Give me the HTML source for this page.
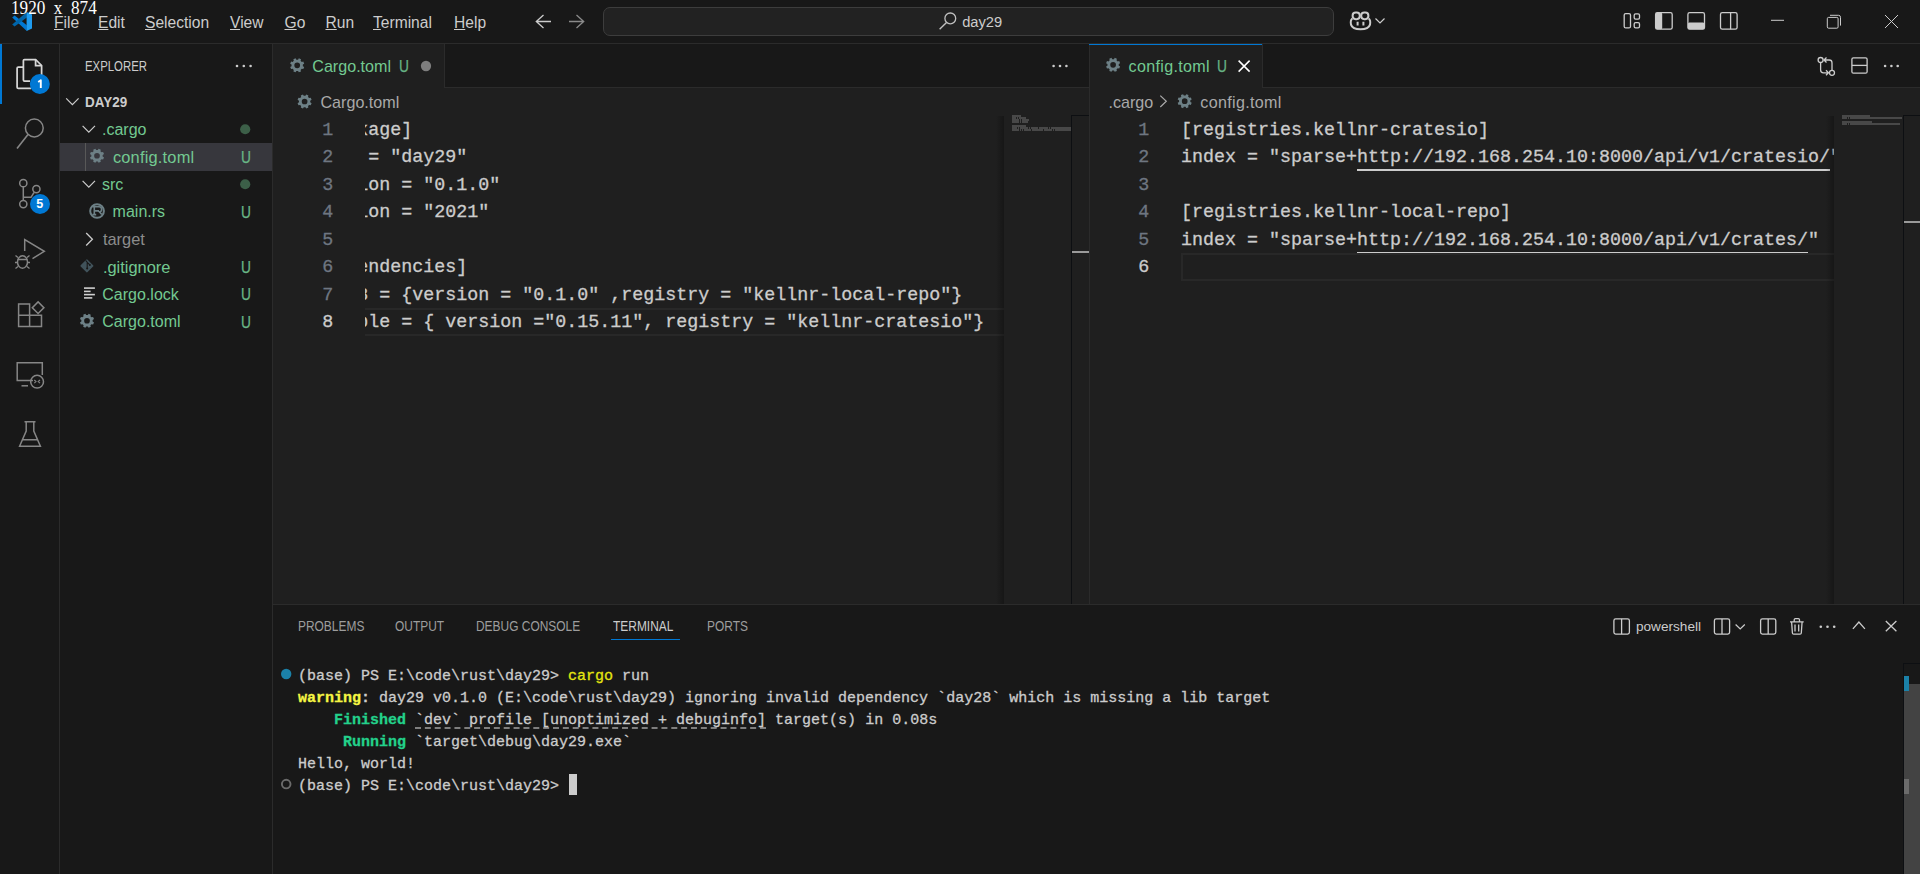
<!DOCTYPE html>
<html><head><meta charset="utf-8">
<style>
*{box-sizing:border-box;margin:0;padding:0}
html,body{width:1920px;height:874px;overflow:hidden;background:#181818;font-family:"Liberation Sans",sans-serif;color:#cccccc}
.a{position:absolute;white-space:pre}
.mono{font-family:"Liberation Mono",monospace}
.code{-webkit-text-stroke:0.3px currentColor}
svg{position:absolute;overflow:visible}
.menu{font-size:15.6px;top:14.2px;line-height:18px;color:#cccccc}
.menu u{text-decoration:underline;text-underline-offset:1px;text-decoration-thickness:1px}
</style></head><body>
<!-- TITLE BAR -->
<div class="a" style="left:0;top:0;width:1920px;height:44px;background:#181818;border-bottom:1px solid #2b2b2b"></div>
<svg style="left:0;top:0" width="40" height="40" viewBox="0 0 40 40">
 <polygon points="12.2,17.4 14.6,15.4 26.8,25.2 26.8,31" fill="#0078d4"/>
 <polygon points="12.2,24.6 14.6,26.6 26.8,17.6 26.8,12" fill="#0065a9"/>
 <polygon points="26.6,12 32,14.6 32,28.4 26.6,31" fill="#1f9cf0"/>
</svg>
<div class="a menu" style="left:54px"><u>F</u>ile</div>
<div class="a menu" style="left:98px"><u>E</u>dit</div>
<div class="a menu" style="left:145px"><u>S</u>election</div>
<div class="a menu" style="left:230px"><u>V</u>iew</div>
<div class="a menu" style="left:284.5px"><u>G</u>o</div>
<div class="a menu" style="left:325.5px"><u>R</u>un</div>
<div class="a menu" style="left:373px"><u>T</u>erminal</div>
<div class="a menu" style="left:454px"><u>H</u>elp</div>
<svg style="left:0;top:0" width="10" height="10">
 <path d="M543.5,15 L536.3,21.5 L543.5,28 M536.3,21.5 H551" stroke="#cccccc" stroke-width="1.3" fill="none"/>
 <path d="M576.5,15 L583.7,21.5 L576.5,28 M583.7,21.5 H569" stroke="#8a8a8a" stroke-width="1.3" fill="none"/>
</svg>
<div class="a" style="left:602.5px;top:6.8px;width:731px;height:29px;background:#222222;border:1px solid #3d3d3d;border-radius:7px"></div>
<svg style="left:0;top:0" width="10" height="10">
 <circle cx="950.3" cy="18.4" r="5.4" stroke="#c0c0c0" stroke-width="1.3" fill="none"/>
 <path d="M946.5,22.4 L939.6,29.3" stroke="#c0c0c0" stroke-width="1.4" fill="none"/>
</svg>
<div class="a" style="left:962.2px;top:13px;font-size:14.7px;line-height:18px;color:#cccccc">day29</div>
<!-- copilot -->
<svg style="left:0;top:0" width="10" height="10" fill="none" stroke="#cccccc">
 <rect x="1352.6" y="12.6" width="7.2" height="6.6" rx="3.1" stroke-width="2"/>
 <rect x="1361.2" y="12.6" width="7.2" height="6.6" rx="3.1" stroke-width="2"/>
 <path d="M1352.3,18.6 C1350.6,19.8 1350.6,22.5 1351,24.6 C1352.2,28.6 1356,29.3 1360.5,29.3 C1365,29.3 1368.8,28.6 1370,24.6 C1370.4,22.5 1370.4,19.8 1368.7,18.6" stroke-width="2"/>
 <path d="M1357.6,21.8 V25.4 M1363.4,21.8 V25.4" stroke-width="2"/>
 <path d="M1375.5,18.5 L1380,23 L1384.5,18.5" stroke-width="1.2"/>
</svg>
<!-- layout icons -->
<svg style="left:0;top:0" width="10" height="10">
 <rect x="1624.2" y="13.6" width="6.3" height="14.3" rx="1.5" stroke="#cccccc" stroke-width="1.3" fill="none"/>
 <rect x="1634.2" y="13.8" width="5.3" height="5.3" rx="1.4" stroke="#cccccc" stroke-width="1.3" fill="none"/>
 <rect x="1634.2" y="22.6" width="5.3" height="5.3" rx="1.4" stroke="#cccccc" stroke-width="1.3" fill="none"/>
 <rect x="1655.6" y="12.6" width="16.6" height="16.6" rx="1.8" stroke="#cccccc" stroke-width="1.3" fill="none"/>
 <rect x="1655.6" y="12.6" width="6.6" height="16.6" rx="1.5" fill="#cccccc"/>
 <rect x="1687.9" y="12.6" width="16.6" height="16.6" rx="1.8" stroke="#cccccc" stroke-width="1.3" fill="none"/>
 <rect x="1687.9" y="22.6" width="16.6" height="6.6" rx="1.5" fill="#cccccc"/>
 <rect x="1720.5" y="12.6" width="16.6" height="16.6" rx="1.8" stroke="#cccccc" stroke-width="1.3" fill="none"/>
 <path d="M1730.6,12.6 V29.2" stroke="#cccccc" stroke-width="1.3"/>
 <path d="M1771,20.3 H1784" stroke="#cccccc" stroke-width="1"/>
 <rect x="1827.3" y="17.4" width="10.8" height="10.8" rx="1.3" stroke="#cccccc" stroke-width="1" fill="none"/>
 <path d="M1830,15.3 H1838.5 Q1840.5,15.3 1840.5,17.3 V25.6" stroke="#cccccc" stroke-width="1" fill="none"/>
 <path d="M1885,15 L1898,28 M1898,15 L1885,28" stroke="#cccccc" stroke-width="1" fill="none"/>
</svg>
<div class="a" style="left:11.2px;top:-0.2px;font-family:'Liberation Serif',serif;font-size:18.3px;line-height:17px;color:#ffffff;transform:scaleX(0.938);transform-origin:0 0">1920  x  874</div>

<!-- ACTIVITY BAR -->
<div class="a" style="left:0;top:44px;width:60px;height:830px;background:#181818;border-right:1px solid #2b2b2b"></div>
<div class="a" style="left:0;top:44px;width:2px;height:60px;background:#0078d4"></div>
<svg style="left:0;top:0" width="10" height="10" fill="none" stroke-width="1.5">
 <!-- explorer -->
 <g stroke-width="1.75">
 <path d="M23.4,67 V60.6 Q23.4,59.5 24.5,59.5 H35.6 L41.6,65.5 V76" stroke="#d7d7d7"/>
 <path d="M35.6,59.5 V65.5 H41.6" stroke="#d7d7d7"/>
 <path d="M23.4,67 H18.3 Q17.1,67 17.1,68.2 V87.2 Q17.1,88.3 18.3,88.3 H31" stroke="#d7d7d7"/>
 <path d="M23.4,67 V80 Q23.4,81 24.5,81 H30" stroke="#d7d7d7"/>
 </g>
 <!-- search -->
 <circle cx="34.3" cy="128" r="8.9" stroke="#868686"/>
 <path d="M28,134.5 L17,148.5" stroke="#868686" stroke-width="1.6"/>
 <!-- source control -->
 <circle cx="23.3" cy="183.2" r="3.6" stroke="#868686"/>
 <circle cx="23.3" cy="204.1" r="3.6" stroke="#868686"/>
 <circle cx="36.4" cy="189.1" r="3.6" stroke="#868686"/>
 <path d="M23.3,187.1 V200.2 M23.3,197.3 H31 L34,192.5" stroke="#868686"/>
 <!-- run debug -->
 <path d="M24.7,251 V239.5 L44.3,251.3 L32.5,258.6" stroke="#868686"/>
 <ellipse cx="22.5" cy="262" rx="5" ry="6.2" stroke="#868686"/>
 <path d="M17.5,259.5 H27.5 M15.5,255.5 L18,257.5 M29.5,255.5 L27,257.5 M15,262.5 H17.5 M27.5,262.5 H30 M15.5,268.5 L18,266.5 M29.5,268.5 L27,266.5" stroke="#868686" stroke-width="1.3"/>
 <!-- extensions -->
 <path d="M18.6,304 H29.6 V315.2 H41.5 V326.4 H18.6 Z M18.6,315.2 H29.6 V326.4" stroke="#868686"/>
 <rect x="34" y="303.6" width="8.2" height="8.2" transform="rotate(45 38.1 307.7)" stroke="#868686"/>
 <!-- remote explorer -->
 <path d="M33,380.5 H17.2 V362.8 H42.3 V375" stroke="#868686"/>
 <path d="M21.5,385.8 H28" stroke="#868686"/>
 <circle cx="37.1" cy="381.7" r="6.4" stroke="#868686"/>
 <path d="M34.3,380 L36,381.6 L34.3,383.2 M40,380 L38.2,381.6 L40,383.2" stroke="#868686" stroke-width="1.1"/>
 <!-- testing -->
 <path d="M24.5,421.8 H35.5 M26.2,421.8 V431 L19.6,446.2 H40.4 L33.8,431 V421.8 M22.5,439.8 H37.5" stroke="#868686"/>
</svg>
<svg style="left:0;top:0" width="10" height="10"><circle cx="39.8" cy="84" r="10" fill="#0078d4"/><path d="M40.8,88 V80.3 L38.2,82" stroke="#ffffff" stroke-width="1.9" fill="none" stroke-linejoin="round"/></svg>
<div class="a" style="left:29.8px;top:193.8px;width:20px;height:20px;border-radius:10px;background:#0078d4;color:#fff;font-size:12.5px;font-weight:bold;line-height:20px;text-align:center">5</div>

<!-- SIDEBAR -->
<div class="a" style="left:60px;top:44px;width:213px;height:830px;background:#181818;border-right:1px solid #2b2b2b"></div>
<div class="a" style="left:85.2px;top:57.5px;font-size:14.6px;line-height:16px;color:#cccccc;transform:scaleX(0.78);transform-origin:0 0">EXPLORER</div>
<svg style="left:0;top:0" width="10" height="10"><circle cx="237" cy="66" r="1.3" fill="#cccccc"/><circle cx="243.8" cy="66" r="1.3" fill="#cccccc"/><circle cx="250.6" cy="66" r="1.3" fill="#cccccc"/></svg>
<div class="a" style="left:60px;top:143.00px;width:212px;height:27.5px;background:#37373d"></div>
<div class="a" style="left:85px;top:143.00px;width:1px;height:27.5px;background:#585858"></div>
<svg style="left:0;top:0" width="10" height="10" fill="none">
<path d="M66.2,98.35 L72.4,104.55 L78.60000000000001,98.35" stroke="#cccccc" stroke-width="1.2"/>
<path d="M82.6,125.85 L88.8,132.05 L95.0,125.85" stroke="#cccccc" stroke-width="1.2"/>
<path d="M82.6,180.85 L88.8,187.05 L95.0,180.85" stroke="#cccccc" stroke-width="1.2"/>
<path d="M86.2,233.05 L92.4,239.25 L86.2,245.45" stroke="#cccccc" stroke-width="1.3"/>
<path d="M102.64,156.60 L104.01,157.38 L103.11,159.56 L101.58,159.14 L100.39,160.33 L100.81,161.86 L98.63,162.76 L97.85,161.39 L96.15,161.39 L95.37,162.76 L93.19,161.86 L93.61,160.33 L92.42,159.14 L90.89,159.56 L89.99,157.38 L91.36,156.60 L91.36,154.90 L89.99,154.12 L90.89,151.94 L92.42,152.36 L93.61,151.17 L93.19,149.64 L95.37,148.74 L96.15,150.11 L97.85,150.11 L98.63,148.74 L100.81,149.64 L100.39,151.17 L101.58,152.36 L103.11,151.94 L104.01,154.12 L102.64,154.90 Z M99.85,155.75 A2.85,2.85 0 1,0 94.15,155.75 A2.85,2.85 0 1,0 99.85,155.75 Z" fill="#6d8086" fill-rule="evenodd"/>
<path d="M92.64,321.60 L94.01,322.38 L93.11,324.56 L91.58,324.14 L90.39,325.33 L90.81,326.86 L88.63,327.76 L87.85,326.39 L86.15,326.39 L85.37,327.76 L83.19,326.86 L83.61,325.33 L82.42,324.14 L80.89,324.56 L79.99,322.38 L81.36,321.60 L81.36,319.90 L79.99,319.12 L80.89,316.94 L82.42,317.36 L83.61,316.17 L83.19,314.64 L85.37,313.74 L86.15,315.11 L87.85,315.11 L88.63,313.74 L90.81,314.64 L90.39,316.17 L91.58,317.36 L93.11,316.94 L94.01,319.12 L92.64,319.90 Z M89.85,320.75 A2.85,2.85 0 1,0 84.15,320.75 A2.85,2.85 0 1,0 89.85,320.75 Z" fill="#6d8086" fill-rule="evenodd"/>
<circle cx="97.05" cy="211.0" r="6.85" stroke="#6d8086" stroke-width="2"/>
<path d="M92.6,206.8 H99.2 Q101.6,206.8 101.6,209.4 Q101.6,211.6 99.4,211.8 L101.8,214.6 M94.3,206.8 V214.6 M92.4,214.6 H96.2 M94.3,210.9 H99" stroke="#6d8086" stroke-width="1.6" fill="none"/>
<rect x="82.0" y="261.0" width="9.8" height="9.8" rx="1" transform="rotate(45 86.9 265.9)" fill="#41535b"/>
<path d="M85.6,260.4 L87.2,262.09999999999997 V268.9 M87.2,262.29999999999995 L89.8,264.9" stroke="#181818" stroke-width="1.1" fill="none"/><circle cx="87.2" cy="268.5" r="1" fill="#181818"/><circle cx="89.9" cy="265.0" r="1" fill="#181818"/>
<path d="M84,288.1 H94.9" stroke="#d0d0d0" stroke-width="1.6"/>
<path d="M84,291.4 H90.6" stroke="#d0d0d0" stroke-width="1.6"/>
<path d="M84,294.6 H94.9" stroke="#d0d0d0" stroke-width="1.6"/>
<path d="M84,297.9 H92.3" stroke="#d0d0d0" stroke-width="1.6"/>
<circle cx="245.2" cy="129.25" r="5.1" fill="#3c5f48"/>
<circle cx="245.2" cy="184.25" r="5.1" fill="#3c5f48"/>
</svg>
<div class="a" style="left:85.3px;top:94.15px;font-size:14.1px;font-weight:bold;line-height:16px;color:#cccccc;transform:scaleX(0.955);transform-origin:0 0">DAY29</div>
<div class="a" style="left:102.00px;top:119.61px;font-size:16.0px;letter-spacing:0;line-height:20px;color:#73c991">.cargo</div>
<div class="a" style="left:112.90px;top:146.75px;font-size:16.4px;letter-spacing:0.2px;line-height:20px;color:#73c991">config.toml</div>
<div class="a" style="left:241.0px;top:147.75px;font-size:16px;line-height:20px;color:#68b585;transform:scaleX(0.86);transform-origin:0 0;-webkit-text-stroke:0.25px #68b585">U</div>
<div class="a" style="left:102.00px;top:174.61px;font-size:16.0px;letter-spacing:0;line-height:20px;color:#73c991">src</div>
<div class="a" style="left:112.60px;top:202.11px;font-size:16.0px;letter-spacing:0;line-height:20px;color:#73c991">main.rs</div>
<div class="a" style="left:241.0px;top:202.75px;font-size:16px;line-height:20px;color:#68b585;transform:scaleX(0.86);transform-origin:0 0;-webkit-text-stroke:0.25px #68b585">U</div>
<div class="a" style="left:102.90px;top:229.25px;font-size:16.4px;letter-spacing:0;line-height:20px;color:#8c8c8c">target</div>
<div class="a" style="left:102.90px;top:256.75px;font-size:16.4px;letter-spacing:0;line-height:20px;color:#73c991">.gitignore</div>
<div class="a" style="left:241.0px;top:257.75px;font-size:16px;line-height:20px;color:#68b585;transform:scaleX(0.86);transform-origin:0 0;-webkit-text-stroke:0.25px #68b585">U</div>
<div class="a" style="left:102.30px;top:284.61px;font-size:16.0px;letter-spacing:0;line-height:20px;color:#73c991">Cargo.lock</div>
<div class="a" style="left:241.0px;top:285.25px;font-size:16px;line-height:20px;color:#68b585;transform:scaleX(0.86);transform-origin:0 0;-webkit-text-stroke:0.25px #68b585">U</div>
<div class="a" style="left:102.30px;top:312.11px;font-size:16.0px;letter-spacing:0;line-height:20px;color:#73c991">Cargo.toml</div>
<div class="a" style="left:241.0px;top:312.75px;font-size:16px;line-height:20px;color:#68b585;transform:scaleX(0.86);transform-origin:0 0;-webkit-text-stroke:0.25px #68b585">U</div>
<!-- EDITOR 1 -->
<div class="a" style="left:273px;top:44px;width:816px;height:560px;background:#1f1f1f"></div>
<div class="a" style="left:444px;top:44px;width:645px;height:44px;background:#181818;border-bottom:1px solid #2b2b2b"></div>
<div class="a" style="left:444px;top:44px;width:1px;height:43px;background:#2b2b2b"></div>
<svg style="left:0;top:0" width="10" height="10"><path d="M302.84,66.15 L304.21,66.93 L303.31,69.11 L301.78,68.69 L300.59,69.88 L301.01,71.41 L298.83,72.31 L298.05,70.94 L296.35,70.94 L295.57,72.31 L293.39,71.41 L293.81,69.88 L292.62,68.69 L291.09,69.11 L290.19,66.93 L291.56,66.15 L291.56,64.45 L290.19,63.67 L291.09,61.49 L292.62,61.91 L293.81,60.72 L293.39,59.19 L295.57,58.29 L296.35,59.66 L298.05,59.66 L298.83,58.29 L301.01,59.19 L300.59,60.72 L301.78,61.91 L303.31,61.49 L304.21,63.67 L302.84,64.45 Z M300.05,65.30 A2.85,2.85 0 1,0 294.35,65.30 A2.85,2.85 0 1,0 300.05,65.30 Z" fill="#6d8086" fill-rule="evenodd"/><path d="M310.24,102.35 L311.61,103.13 L310.71,105.31 L309.18,104.89 L307.99,106.08 L308.41,107.61 L306.23,108.51 L305.45,107.14 L303.75,107.14 L302.97,108.51 L300.79,107.61 L301.21,106.08 L300.02,104.89 L298.49,105.31 L297.59,103.13 L298.96,102.35 L298.96,100.65 L297.59,99.87 L298.49,97.69 L300.02,98.11 L301.21,96.92 L300.79,95.39 L302.97,94.49 L303.75,95.86 L305.45,95.86 L306.23,94.49 L308.41,95.39 L307.99,96.92 L309.18,98.11 L310.71,97.69 L311.61,99.87 L310.24,100.65 Z M307.45,101.50 A2.85,2.85 0 1,0 301.75,101.50 A2.85,2.85 0 1,0 307.45,101.50 Z" fill="#6d8086" fill-rule="evenodd"/></svg>
<div class="a" style="left:312.3px;top:56px;font-size:16.1px;line-height:20px;color:#73c991">Cargo.toml</div>
<div class="a" style="left:399px;top:56.6px;font-size:16px;line-height:20px;color:#66b183;transform:scaleX(0.86);transform-origin:0 0;-webkit-text-stroke:0.25px #66b183">U</div>
<svg style="left:0;top:0" width="10" height="10"><circle cx="426.0" cy="66" r="5.15" fill="#7e7e7e"/><circle cx="1053.6" cy="66" r="1.3" fill="#cccccc"/><circle cx="1060" cy="66" r="1.3" fill="#cccccc"/><circle cx="1066.4" cy="66" r="1.3" fill="#cccccc"/></svg>
<div class="a" style="left:320.5px;top:92px;font-size:16.1px;line-height:20px;color:#a9a9a9">Cargo.toml</div>
<div class="a" style="left:365px;top:308.00px;width:639px;height:27.5px;border-top:2px solid #282828;border-bottom:2px solid #282828"></div>
<div class="a mono code" style="left:282.2px;width:51px;text-align:right;top:116.56px;font-size:18.33px;line-height:27.5px;color:#6e7681">1</div>
<div class="a mono code" style="left:282.2px;width:51px;text-align:right;top:144.06px;font-size:18.33px;line-height:27.5px;color:#6e7681">2</div>
<div class="a mono code" style="left:282.2px;width:51px;text-align:right;top:171.56px;font-size:18.33px;line-height:27.5px;color:#6e7681">3</div>
<div class="a mono code" style="left:282.2px;width:51px;text-align:right;top:199.06px;font-size:18.33px;line-height:27.5px;color:#6e7681">4</div>
<div class="a mono code" style="left:282.2px;width:51px;text-align:right;top:226.56px;font-size:18.33px;line-height:27.5px;color:#6e7681">5</div>
<div class="a mono code" style="left:282.2px;width:51px;text-align:right;top:254.06px;font-size:18.33px;line-height:27.5px;color:#6e7681">6</div>
<div class="a mono code" style="left:282.2px;width:51px;text-align:right;top:281.56px;font-size:18.33px;line-height:27.5px;color:#6e7681">7</div>
<div class="a mono code" style="left:282.2px;width:51px;text-align:right;top:309.06px;font-size:18.33px;line-height:27.5px;color:#cccccc">8</div>
<div class="a" style="left:365px;top:115.50px;width:639px;height:440px;overflow:hidden">
<div class="a mono code" style="left:-51.70px;top:1.06px;font-size:18.33px;line-height:27.5px;color:#cccccc">[package]</div>
<div class="a mono code" style="left:-51.70px;top:28.56px;font-size:18.33px;line-height:27.5px;color:#cccccc">name = "day29"</div>
<div class="a mono code" style="left:-51.70px;top:56.06px;font-size:18.33px;line-height:27.5px;color:#cccccc">version = "0.1.0"</div>
<div class="a mono code" style="left:-51.70px;top:83.56px;font-size:18.33px;line-height:27.5px;color:#cccccc">edition = "2021"</div>
<div class="a mono code" style="left:-51.70px;top:111.06px;font-size:18.33px;line-height:27.5px;color:#cccccc"></div>
<div class="a mono code" style="left:-51.70px;top:138.56px;font-size:18.33px;line-height:27.5px;color:#cccccc">[dependencies]</div>
<div class="a mono code" style="left:-51.70px;top:166.06px;font-size:18.33px;line-height:27.5px;color:#cccccc">day28 = {version = "0.1.0" ,registry = "kellnr-local-repo"}</div>
<div class="a mono code" style="left:-51.70px;top:193.56px;font-size:18.33px;line-height:27.5px;color:#cccccc">tumbble = { version ="0.15.11", registry = "kellnr-cratesio"}</div>
</div>
<div class="a" style="left:996px;top:115.5px;width:8px;height:488.5px;background:linear-gradient(to right,rgba(0,0,0,0),rgba(0,0,0,0.28))"></div>
<div class="a" style="left:1071px;top:114.5px;width:18px;height:489.5px;border-left:1px solid #0d0f12;border-top:1px solid #0d0f12"></div>
<div class="a" style="left:1072px;top:251px;width:17px;height:2px;background:#9a9a9a"></div>
<svg style="left:0;top:0" width="10" height="10"><rect x="1012.00" y="115.00" width="9.00" height="2" fill="rgba(204,204,204,0.24)"/><rect x="1012.00" y="117.00" width="4.00" height="2" fill="rgba(204,204,204,0.24)"/><rect x="1017.00" y="117.00" width="1.00" height="2" fill="rgba(204,204,204,0.24)"/><rect x="1019.00" y="117.00" width="7.00" height="2" fill="rgba(204,204,204,0.24)"/><rect x="1012.00" y="119.00" width="7.00" height="2" fill="rgba(204,204,204,0.24)"/><rect x="1020.00" y="119.00" width="1.00" height="2" fill="rgba(204,204,204,0.24)"/><rect x="1022.00" y="119.00" width="7.00" height="2" fill="rgba(204,204,204,0.24)"/><rect x="1012.00" y="121.00" width="7.00" height="2" fill="rgba(204,204,204,0.24)"/><rect x="1020.00" y="121.00" width="1.00" height="2" fill="rgba(204,204,204,0.24)"/><rect x="1022.00" y="121.00" width="6.00" height="2" fill="rgba(204,204,204,0.24)"/><rect x="1012.00" y="125.00" width="14.00" height="2" fill="rgba(204,204,204,0.24)"/><rect x="1012.00" y="127.00" width="5.00" height="2" fill="rgba(204,204,204,0.24)"/><rect x="1018.00" y="127.00" width="1.00" height="2" fill="rgba(204,204,204,0.24)"/><rect x="1020.00" y="127.00" width="8.00" height="2" fill="rgba(204,204,204,0.24)"/><rect x="1029.00" y="127.00" width="1.00" height="2" fill="rgba(204,204,204,0.24)"/><rect x="1031.00" y="127.00" width="7.00" height="2" fill="rgba(204,204,204,0.24)"/><rect x="1039.00" y="127.00" width="9.00" height="2" fill="rgba(204,204,204,0.24)"/><rect x="1049.00" y="127.00" width="1.00" height="2" fill="rgba(204,204,204,0.24)"/><rect x="1051.00" y="127.00" width="20.00" height="2" fill="rgba(204,204,204,0.24)"/><rect x="1012.00" y="129.00" width="7.00" height="2" fill="rgba(204,204,204,0.24)"/><rect x="1020.00" y="129.00" width="1.00" height="2" fill="rgba(204,204,204,0.24)"/><rect x="1022.00" y="129.00" width="1.00" height="2" fill="rgba(204,204,204,0.24)"/><rect x="1024.00" y="129.00" width="7.00" height="2" fill="rgba(204,204,204,0.24)"/><rect x="1032.00" y="129.00" width="11.00" height="2" fill="rgba(204,204,204,0.24)"/><rect x="1044.00" y="129.00" width="8.00" height="2" fill="rgba(204,204,204,0.24)"/><rect x="1053.00" y="129.00" width="1.00" height="2" fill="rgba(204,204,204,0.24)"/><rect x="1055.00" y="129.00" width="16.00" height="2" fill="rgba(204,204,204,0.24)"/></svg>
<!-- EDITOR 2 -->
<div class="a" style="left:1089px;top:44px;width:831px;height:560px;background:#1f1f1f;border-left:1px solid #2b2b2b"></div>
<div class="a" style="left:1262px;top:44px;width:658px;height:44px;background:#181818;border-bottom:1px solid #2b2b2b"></div>
<div class="a" style="left:1262px;top:44px;width:1px;height:43px;background:#2b2b2b"></div>
<div class="a" style="left:1089px;top:44px;width:173px;height:1px;background:#0078d4"></div>
<svg style="left:0;top:0" width="10" height="10"><path d="M1118.74,65.65 L1120.11,66.43 L1119.21,68.61 L1117.68,68.19 L1116.49,69.38 L1116.91,70.91 L1114.73,71.81 L1113.95,70.44 L1112.25,70.44 L1111.47,71.81 L1109.29,70.91 L1109.71,69.38 L1108.52,68.19 L1106.99,68.61 L1106.09,66.43 L1107.46,65.65 L1107.46,63.95 L1106.09,63.17 L1106.99,60.99 L1108.52,61.41 L1109.71,60.22 L1109.29,58.69 L1111.47,57.79 L1112.25,59.16 L1113.95,59.16 L1114.73,57.79 L1116.91,58.69 L1116.49,60.22 L1117.68,61.41 L1119.21,60.99 L1120.11,63.17 L1118.74,63.95 Z M1115.95,64.80 A2.85,2.85 0 1,0 1110.25,64.80 A2.85,2.85 0 1,0 1115.95,64.80 Z" fill="#6d8086" fill-rule="evenodd"/><path d="M1190.34,102.05 L1191.71,102.83 L1190.81,105.01 L1189.28,104.59 L1188.09,105.78 L1188.51,107.31 L1186.33,108.21 L1185.55,106.84 L1183.85,106.84 L1183.07,108.21 L1180.89,107.31 L1181.31,105.78 L1180.12,104.59 L1178.59,105.01 L1177.69,102.83 L1179.06,102.05 L1179.06,100.35 L1177.69,99.57 L1178.59,97.39 L1180.12,97.81 L1181.31,96.62 L1180.89,95.09 L1183.07,94.19 L1183.85,95.56 L1185.55,95.56 L1186.33,94.19 L1188.51,95.09 L1188.09,96.62 L1189.28,97.81 L1190.81,97.39 L1191.71,99.57 L1190.34,100.35 Z M1187.55,101.20 A2.85,2.85 0 1,0 1181.85,101.20 A2.85,2.85 0 1,0 1187.55,101.20 Z" fill="#6d8086" fill-rule="evenodd"/><path d="M1238.6,60.6 L1249.6,71.6 M1249.6,60.6 L1238.6,71.6" stroke="#ffffff" stroke-width="1.5"/><path d="M1160.3,95.6 L1166.3,101.3 L1160.3,107" stroke="#a9a9a9" stroke-width="1.2" fill="none"/><circle cx="1820.6" cy="60" r="2.5" stroke="#cccccc" stroke-width="1.3" fill="none"/><circle cx="1832" cy="72.8" r="2.5" stroke="#cccccc" stroke-width="1.3" fill="none"/><path d="M1820.6,62.5 V70 Q1820.6,72.8 1823.4,72.8 H1828.5 M1826,70.3 L1828.5,72.8 L1826,75.3" stroke="#cccccc" stroke-width="1.3" fill="none"/><path d="M1832,70.3 V62.8 Q1832,60 1829.2,60 H1824 M1826.5,57.5 L1824,60 L1826.5,62.5" stroke="#cccccc" stroke-width="1.3" fill="none"/><rect x="1851.9" y="57.8" width="15.2" height="15.4" rx="1.5" stroke="#cccccc" stroke-width="1.3" fill="none"/><path d="M1851.9,65.4 H1867.1" stroke="#cccccc" stroke-width="1.3"/><circle cx="1885.1" cy="66" r="1.3" fill="#cccccc"/><circle cx="1891.4" cy="66" r="1.3" fill="#cccccc"/><circle cx="1897.7" cy="66" r="1.3" fill="#cccccc"/></svg>
<div class="a" style="left:1128.5px;top:56px;font-size:16.1px;letter-spacing:0.33px;line-height:20px;color:#73c991">config.toml</div>
<div class="a" style="left:1217.1px;top:56.6px;font-size:16px;line-height:20px;color:#66b183;transform:scaleX(0.86);transform-origin:0 0;-webkit-text-stroke:0.25px #66b183">U</div>
<div class="a" style="left:1108.5px;top:92px;font-size:16.1px;line-height:20px;color:#a9a9a9">.cargo</div>
<div class="a" style="left:1200.3px;top:92px;font-size:16.1px;letter-spacing:0.33px;line-height:20px;color:#a9a9a9">config.toml</div>
<div class="a" style="left:1181px;top:253.00px;width:653px;height:27.5px;border-top:2px solid #282828;border-bottom:2px solid #282828;border-left:2px solid #282828"></div>
<div class="a mono code" style="left:1098.2px;width:51px;text-align:right;top:116.56px;font-size:18.33px;line-height:27.5px;color:#6e7681">1</div>
<div class="a mono code" style="left:1098.2px;width:51px;text-align:right;top:144.06px;font-size:18.33px;line-height:27.5px;color:#6e7681">2</div>
<div class="a mono code" style="left:1098.2px;width:51px;text-align:right;top:171.56px;font-size:18.33px;line-height:27.5px;color:#6e7681">3</div>
<div class="a mono code" style="left:1098.2px;width:51px;text-align:right;top:199.06px;font-size:18.33px;line-height:27.5px;color:#6e7681">4</div>
<div class="a mono code" style="left:1098.2px;width:51px;text-align:right;top:226.56px;font-size:18.33px;line-height:27.5px;color:#6e7681">5</div>
<div class="a mono code" style="left:1098.2px;width:51px;text-align:right;top:254.06px;font-size:18.33px;line-height:27.5px;color:#cccccc">6</div>
<div class="a" style="left:1181px;top:115.50px;width:653px;height:440px;overflow:hidden">
<div class="a mono code" style="left:0px;top:1.06px;font-size:18.33px;line-height:27.5px;color:#cccccc">[registries.kellnr-cratesio]</div>
<div class="a mono code" style="left:0px;top:28.56px;font-size:18.33px;line-height:27.5px;color:#cccccc">index = "sparse+http://192.168.254.10:8000/api/v1/cratesio/"</div>
<div class="a mono code" style="left:0px;top:56.06px;font-size:18.33px;line-height:27.5px;color:#cccccc"></div>
<div class="a mono code" style="left:0px;top:83.56px;font-size:18.33px;line-height:27.5px;color:#cccccc">[registries.kellnr-local-repo]</div>
<div class="a mono code" style="left:0px;top:111.06px;font-size:18.33px;line-height:27.5px;color:#cccccc">index = "sparse+http://192.168.254.10:8000/api/v1/crates/"</div>
<div class="a mono code" style="left:0px;top:138.56px;font-size:18.33px;line-height:27.5px;color:#cccccc"></div>
<div class="a" style="left:176px;top:53.5px;width:473px;height:1.6px;background:#cccccc"></div>
<div class="a" style="left:176px;top:136px;width:451px;height:1.6px;background:#cccccc"></div>
</div>
<div class="a" style="left:1826px;top:115.5px;width:8px;height:488.5px;background:linear-gradient(to right,rgba(0,0,0,0),rgba(0,0,0,0.28))"></div>
<svg style="left:0;top:0" width="10" height="10"><rect x="1842.00" y="115.00" width="28.00" height="2" fill="rgba(204,204,204,0.24)"/><rect x="1842.00" y="117.00" width="5.00" height="2" fill="rgba(204,204,204,0.24)"/><rect x="1848.00" y="117.00" width="1.00" height="2" fill="rgba(204,204,204,0.24)"/><rect x="1850.00" y="117.00" width="52.00" height="2" fill="rgba(204,204,204,0.24)"/><rect x="1842.00" y="121.00" width="30.00" height="2" fill="rgba(204,204,204,0.24)"/><rect x="1842.00" y="123.00" width="5.00" height="2" fill="rgba(204,204,204,0.24)"/><rect x="1848.00" y="123.00" width="1.00" height="2" fill="rgba(204,204,204,0.24)"/><rect x="1850.00" y="123.00" width="50.00" height="2" fill="rgba(204,204,204,0.24)"/></svg>
<div class="a" style="left:1903px;top:114.5px;width:17px;height:489.5px;border-left:1px solid #0d0f12;border-top:1px solid #0d0f12"></div>
<div class="a" style="left:1904px;top:221px;width:16px;height:2px;background:#9a9a9a"></div>
<!-- PANEL -->
<div class="a" style="left:273px;top:604px;width:1647px;height:270px;background:#181818;border-top:1px solid #2b2b2b"></div>
<div class="a" style="left:297.8px;top:617.6px;font-size:14.3px;line-height:16px;color:#9d9d9d;transform:scaleX(0.835);transform-origin:0 0">PROBLEMS</div>
<div class="a" style="left:394.7px;top:617.6px;font-size:14.3px;line-height:16px;color:#9d9d9d;transform:scaleX(0.835);transform-origin:0 0">OUTPUT</div>
<div class="a" style="left:476px;top:617.6px;font-size:14.3px;line-height:16px;color:#9d9d9d;transform:scaleX(0.835);transform-origin:0 0">DEBUG CONSOLE</div>
<div class="a" style="left:613.3px;top:617.6px;font-size:14.3px;line-height:16px;color:#cccccc;transform:scaleX(0.835);transform-origin:0 0">TERMINAL</div>
<div class="a" style="left:707.3px;top:617.6px;font-size:14.3px;line-height:16px;color:#9d9d9d;transform:scaleX(0.835);transform-origin:0 0">PORTS</div>
<div class="a" style="left:611px;top:639px;width:69px;height:1.25px;background:#0078d4"></div>
<svg style="left:0;top:0" width="10" height="10" fill="none"><rect x="1613.9" y="618.9" width="15.5" height="15.2" rx="1.8" stroke="#cccccc" stroke-width="1.3"/><path d="M1621.6,618.9 V634.1" stroke="#cccccc" stroke-width="1.3"/><rect x="1714.4" y="618.9" width="15.2" height="15.2" rx="1.8" stroke="#cccccc" stroke-width="1.3"/><path d="M1722,618.9 V634.1" stroke="#cccccc" stroke-width="1.3"/><path d="M1735.6,624.5 L1740.2,629 L1744.8,624.5" stroke="#cccccc" stroke-width="1.2"/><rect x="1760.6" y="618.9" width="15.2" height="15.2" rx="1.8" stroke="#cccccc" stroke-width="1.3"/><path d="M1768.2,618.9 V634.1" stroke="#cccccc" stroke-width="1.3"/><path d="M1790,621.8 H1803.7 M1794.2,621.8 V619.8 Q1794.2,618.6 1795.4,618.6 H1798.3 Q1799.5,618.6 1799.5,619.8 V621.8 M1791.6,621.8 L1792.4,633 Q1792.5,634.2 1793.7,634.2 H1800 Q1801.2,634.2 1801.3,633 L1802.1,621.8 M1795,624.5 V631.5 M1798.7,624.5 V631.5" stroke="#cccccc" stroke-width="1.3"/><circle cx="1820.8" cy="626.7" r="1.3" fill="#cccccc"/><circle cx="1827.5" cy="626.7" r="1.3" fill="#cccccc"/><circle cx="1834.2" cy="626.7" r="1.3" fill="#cccccc"/><path d="M1852.9,628.9 L1858.9,622.1 L1864.9,628.9" stroke="#cccccc" stroke-width="1.3"/><path d="M1885.8,621 L1896.4,631.2 M1896.4,621 L1885.8,631.2" stroke="#cccccc" stroke-width="1.3"/></svg>
<div class="a" style="left:1636px;top:619px;font-size:13.6px;line-height:16px;color:#cccccc">powershell</div>
<div class="a mono code" style="left:298px;top:665.80px;font-size:15px;line-height:22px;color:#cccccc">(base) PS E:\code\rust\day29&gt; <span style="color:#e5e510">cargo</span> run</div>
<div class="a mono code" style="left:298px;top:687.80px;font-size:15px;line-height:22px;color:#cccccc"><b style="color:#f5f543">warning</b><b>:</b> day29 v0.1.0 (E:\code\rust\day29) ignoring invalid dependency `day28` which is missing a lib target</div>
<div class="a mono code" style="left:298px;top:709.80px;font-size:15px;line-height:22px;color:#cccccc">    <b style="color:#23d18b">Finished</b> <span style="text-decoration:underline dashed;text-underline-offset:4px;text-decoration-color:#a0a0a0">`dev` profile [unoptimized + debuginfo]</span> target(s) in 0.08s</div>
<div class="a mono code" style="left:298px;top:731.80px;font-size:15px;line-height:22px;color:#cccccc">     <b style="color:#23d18b">Running</b> `target\debug\day29.exe`</div>
<div class="a mono code" style="left:298px;top:753.80px;font-size:15px;line-height:22px;color:#cccccc">Hello, world!</div>
<div class="a mono code" style="left:298px;top:775.80px;font-size:15px;line-height:22px;color:#cccccc">(base) PS E:\code\rust\day29&gt; </div>
<div class="a" style="left:568.5px;top:773.6px;width:8.3px;height:21px;background:#cccccc"></div>
<svg style="left:0;top:0" width="10" height="10"><circle cx="286.2" cy="674" r="5.2" fill="#1b81a8"/><circle cx="286.2" cy="784.1" r="4.3" stroke="#6b6b6b" stroke-width="1.9" fill="none"/></svg>
<div class="a" style="left:1903px;top:663px;width:17px;height:211px;background:#181818;border-left:1px solid #0d0f12;border-top:1px solid #0d0f12"></div>
<div class="a" style="left:1904px;top:684px;width:16px;height:190px;background:#434343"></div>
<div class="a" style="left:1904px;top:676px;width:5px;height:15px;background:#1b81a8"></div>
<div class="a" style="left:1904px;top:778.5px;width:5px;height:15.5px;background:#6b6b6b"></div>
</body></html>
